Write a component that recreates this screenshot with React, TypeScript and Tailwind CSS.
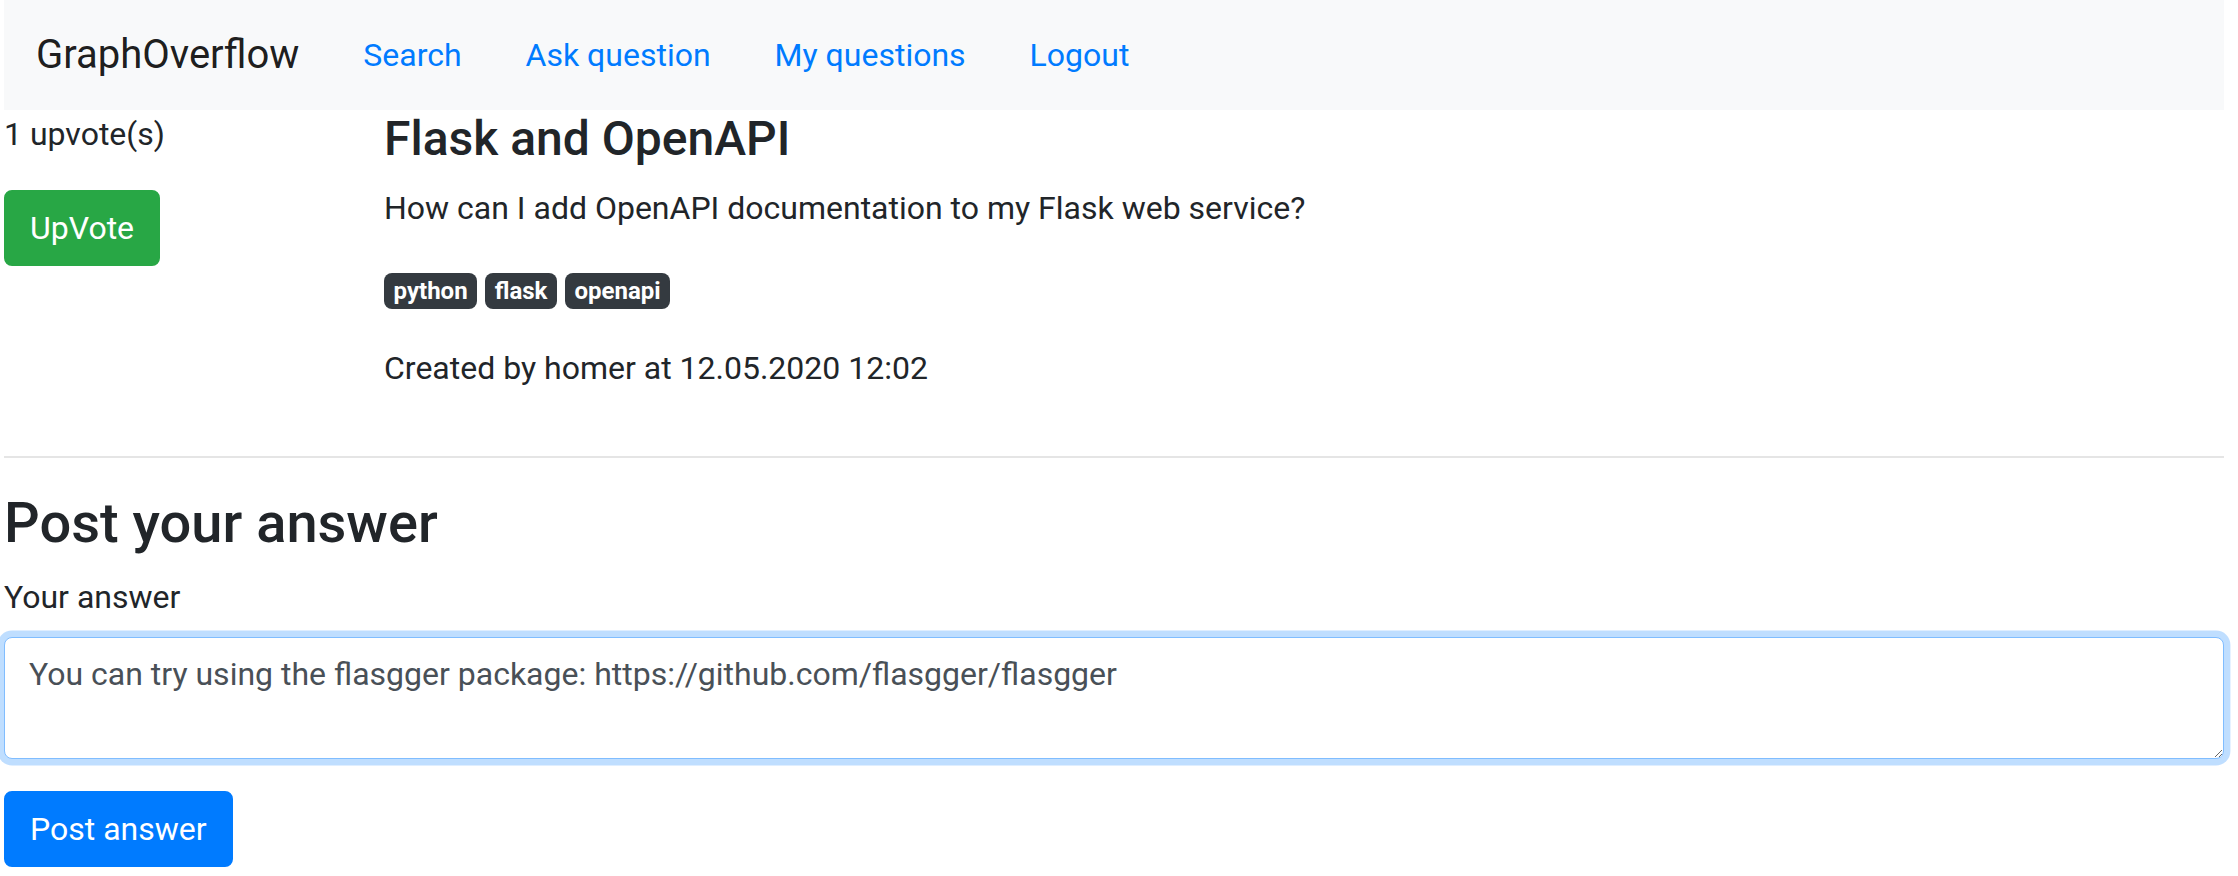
const tags = ["python", "flask", "openapi"];

const links = ["Search", "Ask question", "My questions", "Logout"];

const App = () => {
  return (
    <div className="min-h-screen bg-white pl-[4px] pr-[14px] font-[Roboto,'Noto_Sans',sans-serif] text-[32px] leading-[1.5] text-[#212529]">
      <nav className="flex items-center bg-[#f8f9fa] px-[32px] py-[15px]">
        <a className="mr-[32px] py-[10px] text-[40px] leading-[1.5] text-black/90">
          GraphOverflow
        </a>
        <ul className="flex">
          {links.map((l) => (
            <li key={l}>
              <a className="block px-[32px] py-[16px] text-[#007bff]">{l}</a>
            </li>
          ))}
        </ul>
      </nav>

      <div className="flex">
        <div className="w-[380px] shrink-0">
          <p className="mb-[32px]">1 upvote(s)</p>
          <button className="rounded-[8px] border-2 border-[#28a745] bg-[#28a745] px-[24px] py-[12px] leading-[1.5] text-white">
            UpVote
          </button>
        </div>
        <div className="flex-1">
          <h4 className="mb-[16px] text-[48px] font-medium leading-[1.2]">
            Flask and OpenAPI
          </h4>
          <p className="mb-[32px]">
            How can I add OpenAPI documentation to my Flask web service?
          </p>
          <p className="mb-[32px]">
            {tags.map((t, i) => (
              <span key={t}>
                <span className="inline-block rounded-[8px] bg-[#343a40] px-[9.6px] py-[6px] text-[24px] font-bold leading-none text-white">
                  {t}
                </span>
                {i < tags.length - 1 ? " " : ""}
              </span>
            ))}
          </p>
          <p className="mb-[32px]">Created by homer at 12.05.2020 12:02</p>
        </div>
      </div>

      <hr className="my-[32px] border-0 border-t-[2px] border-black/10" />

      <h3 className="mb-[16px] text-[56px] font-medium leading-[1.2]">
        Post your answer
      </h3>
      <div className="mb-[32px]">
        <label className="mb-[16px] inline-block">Your answer</label>
        <textarea
          rows={2}
          defaultValue="You can try using the flasgger package: https://github.com/flasgger/flasgger"
          className="block w-full rounded-[8px] border border-[#80bdff] bg-white px-[24px] py-[12px] leading-[1.5] text-[#495057] shadow-[0_0_0_6.4px_rgba(0,123,255,0.25)] outline-none"
        />
      </div>
      <button className="rounded-[8px] border-2 border-[#007bff] bg-[#007bff] px-[24px] py-[12px] leading-[1.5] text-white">
        Post answer
      </button>
    </div>
  );
};

export default App;
